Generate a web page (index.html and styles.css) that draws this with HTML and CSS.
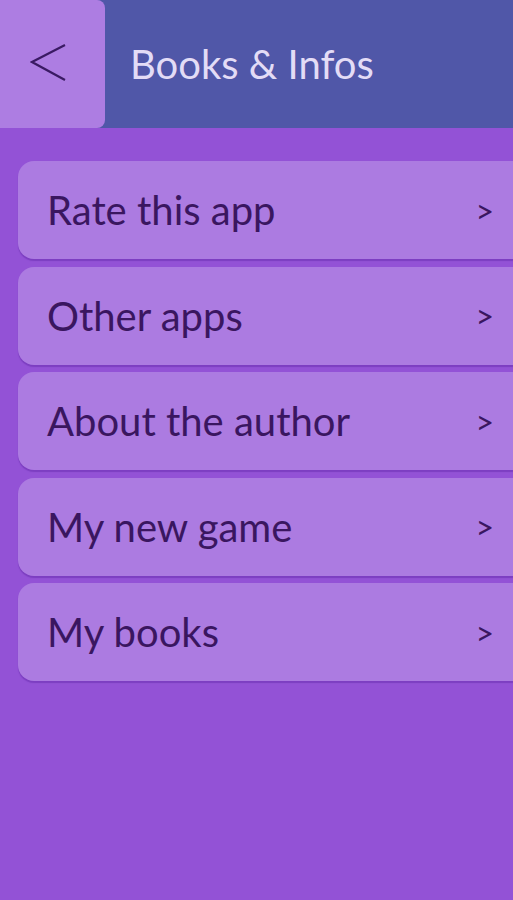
FILE: index.html
```html
<!DOCTYPE html>
<html lang="en">
<head>
  <meta charset="UTF-8">
  <meta name="viewport" content="width=device-width, initial-scale=1.0">
  <title>Books &amp; Infos</title>
  <link rel="stylesheet" href="styles.css">
</head>
<body>

<header class="topbar">
  <button class="back" aria-label="Back">
    <svg width="40" height="40" viewBox="0 0 40 40">
      <polyline points="35,1 2,18 35,36" fill="none" stroke="#3a1a63" stroke-width="2.2"/>
    </svg>
  </button>
  <h1 class="title">Books &amp; Infos</h1>
</header>

<ul class="menu">
  <li class="item"><span>Rate this app</span><span class="arrow">&gt;</span></li>
  <li class="item"><span>Other apps</span><span class="arrow">&gt;</span></li>
  <li class="item"><span>About the author</span><span class="arrow">&gt;</span></li>
  <li class="item"><span>My new game</span><span class="arrow">&gt;</span></li>
  <li class="item"><span>My books</span><span class="arrow">&gt;</span></li>
</ul>

</body>
</html>
```

FILE: styles.css
```css
html, body {
  margin: 0;
  height: 100%;
}
body {
  font-family: Lato, "Open Sans", sans-serif;
  background-color: #9352d6;
}
.topbar {
  display: flex;
  align-items: center;
  height: 128px;
  background-color: #5057a8;
}
.back {
  width: 105px;
  height: 128px;
  padding: 0 0 0 30px;
  display: flex;
  align-items: center;
  background-color: #ad7de2;
  border: none;
  border-radius: 0 8px 8px 0;
  cursor: pointer;
}
.title {
  margin: 0 0 0 25px;
  font-size: 40px;
  font-weight: normal;
  color: #e3dcf6;
}
.menu {
  list-style: none;
  margin: 0;
  padding: 33px 0 0 18px;
  display: flex;
  flex-direction: column;
  gap: 7.5px;
}
.item {
  display: flex;
  align-items: center;
  justify-content: space-between;
  height: 98px;
  padding: 0 19px 0 29px;
  background-color: #ac7be1;
  border-radius: 16px 0 0 16px;
  box-shadow: 0 2px 1px rgba(110, 50, 180, 0.6);
  font-size: 40px;
  color: #3a1660;
}
.arrow {
  font-size: 32px;
}
```
